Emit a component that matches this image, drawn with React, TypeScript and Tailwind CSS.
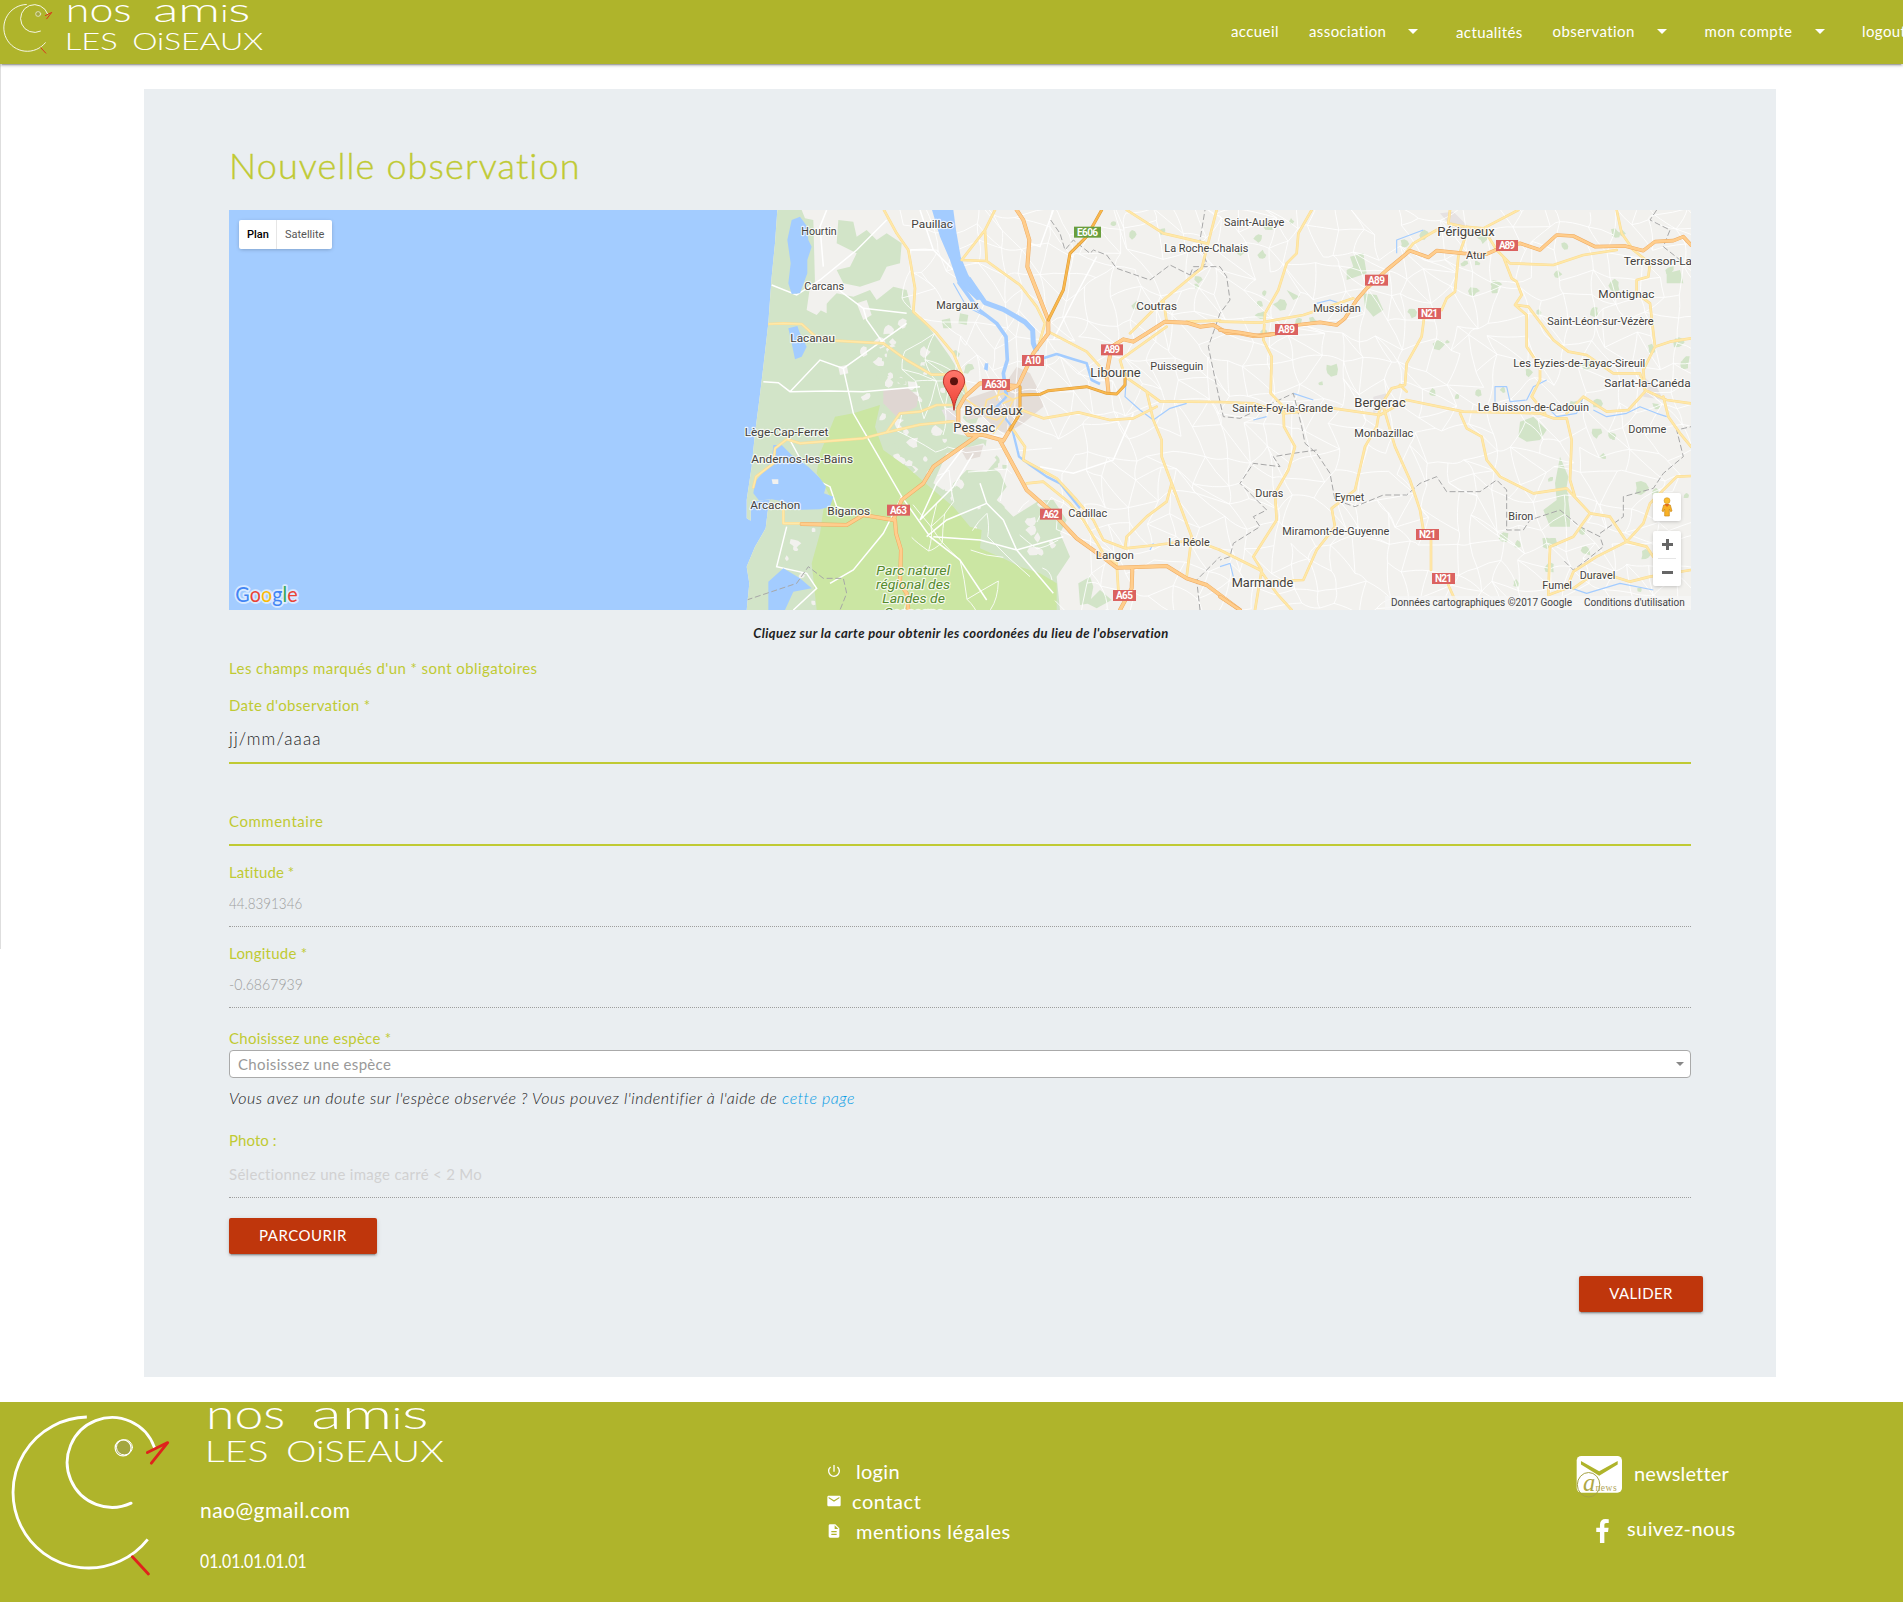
import type { ReactNode } from 'react';
import { MdDescription, MdEmail, MdPowerSettingsNew } from 'react-icons/md';

function Bird({ className }: { className: string }) {
  return (
    <svg className={className} viewBox="30 100 485 490" fill="none" strokeLinecap="round">
      <path d="M260 112A227 227 0 1 0 443 480" stroke="#fff" strokeWidth="8.5" strokeLinecap="butt" />
      <path d="M393 371A135 135 0 1 1 463 203" stroke="#fff" strokeWidth="8.5" />
      <circle cx="369" cy="205" r="24" fill="#a3a640" stroke="#fff" strokeWidth="3.5" />
      <ellipse cx="373" cy="203" rx="24" ry="23" stroke="#fff" strokeWidth="3" />
      <path d="M442 219L503 189L454 251M397 532L445 584" stroke="#df231c" strokeWidth="8.5" strokeLinejoin="round" />
    </svg>
  );
}

function Wordmark({ className }: { className: string }) {
  return (
    <svg className={`overflow-visible ${className}`} viewBox="615 75 720 180" fill="#fff" fontFamily="Lato" fontWeight="300">
      <text x="618" y="146" fontSize="124" textLength="238" lengthAdjust="spacingAndGlyphs">
        nos
      </text>
      <text x="934" y="146" fontSize="124" textLength="352" lengthAdjust="spacingAndGlyphs">
        am<tspan fontSize="88">i</tspan>s
      </text>
      <text x="614" y="247" fontSize="88" textLength="192" lengthAdjust="spacingAndGlyphs">
        LES
      </text>
      <text x="858" y="247" fontSize="88" textLength="474" lengthAdjust="spacingAndGlyphs">
        OiSEAUX
      </text>
    </svg>
  );
}

function seeded(seed: number) {
  let s = seed;
  return () => {
    s = (s * 16807) % 2147483647;
    return s / 2147483647;
  };
}

/** Jittered grid of minor country roads. */
function minorRoads() {
  const rnd = seeded(77);
  const cols = 36;
  const rows = 19;
  const px: number[][] = [];
  const py: number[][] = [];
  for (let r = 0; r < rows; r++) {
    px.push([]);
    py.push([]);
    for (let c = 0; c < cols; c++) {
      px[r].push(Math.round(560 + c * 68 + (rnd() - 0.5) * 62));
      py[r].push(Math.round(15 + r * 68 + (rnd() - 0.5) * 62));
    }
  }
  let d = '';
  for (let r = 0; r < rows; r++) {
    for (let c = 0; c < cols; c++) {
      const link = (rr: number, cc: number) => {
        const mx = (px[r][c] + px[rr][cc]) / 2 + (rnd() - 0.5) * 22;
        const my = (py[r][c] + py[rr][cc]) / 2 + (rnd() - 0.5) * 22;
        if (px[r][c] < 1020 && py[r][c] > 640 && rnd() < 0.65) return;
        d += `M${px[r][c]} ${py[r][c]}Q${mx.toFixed(0)} ${my.toFixed(0)} ${px[rr][cc]} ${py[rr][cc]}`;
      };
      if (c + 1 < cols && rnd() < 0.8) link(r, c + 1);
      if (r + 1 < rows && rnd() < 0.8) link(r + 1, c);
      if (r + 1 < rows && c + 1 < cols && rnd() < 0.35) link(r + 1, c + 1);
    }
  }
  return d;
}

/** Small irregular blobs scattered in a rectangle. */
function blobs(seed: number, n: number, x0: number, y0: number, x1: number, y1: number, size: number) {
  const rnd = seeded(seed);
  let d = '';
  for (let i = 0; i < n; i++) {
    const cx = x0 + rnd() * (x1 - x0);
    const cy = y0 + rnd() * (y1 - y0);
    const r = size * (0.4 + rnd() * 0.8);
    for (let k = 0; k < 8; k++) {
      const a = (k / 8) * Math.PI * 2;
      const q = r * (0.55 + rnd() * 0.7);
      d += `${k ? 'L' : 'M'}${(cx + Math.cos(a) * q).toFixed(0)} ${(cy + Math.sin(a) * q).toFixed(0)}`;
    }
    d += 'Z';
  }
  return d;
}

const MINOR = minorRoads();
const GREEN_SPECKS =
  blobs(11, 42, 1620, 60, 2900, 620, 17) + blobs(5, 22, 2350, 620, 2900, 1220, 17) + blobs(23, 12, 1180, 60, 1640, 560, 13);
const GREEN_WEST = blobs(41, 30, 470, 420, 760, 900, 20) + blobs(43, 18, 640, 760, 860, 960, 24);
const CLEARINGS = blobs(9, 44, 430, 360, 680, 860, 15) + blobs(19, 22, 640, 840, 1000, 1060, 15) + blobs(3, 14, 200, 980, 380, 1220, 13);

const COAST =
  'M172 30L165 130L155 230L145 370L130 500L118 600L105 700L95 800L80 900L80 955L92 962L92 905L150 898L143 935L137 985L105 1040L80 1100L88 1150L80 1230H2913V30Z';

const WEST_YELLOW = [
  'M492 30L530 100L565 150L585 265L580 335L650 400L700 460L725 520L740 580',
  'M145 372L190 370L245 372L285 408L345 422L490 430L560 480L635 524L700 524',
  'M100 862L108 830L160 790L165 745L200 718L240 730L430 715L500 697L600 674L700 664',
  'M500 697L540 640L600 635L650 615L700 615',
  'M825 30L795 90L725 180L800 183M795 90L800 183L900 255L950 320L975 370L955 440',
  'M985 395L1100 455L1140 500L1160 540',
  'M1220 30L1330 100L1460 130M1490 30L1445 205L1330 300L1340 365M1400 365L1500 362',
  'M1330 300L1230 400M1340 380L1200 480L1215 530L1280 575L1320 604L1500 606M1280 575L1300 660L1325 720L1325 770L1355 850L1385 930L1415 1010L1400 1130M1355 850L1340 905L1280 950L1220 1010L1215 1045',
  'M905 630L970 655L1075 637L1170 660L1240 655L1310 620',
  'M880 690L915 740L910 780L1010 835L1070 900L1120 960L1150 1020L1215 1045L1310 1035L1420 1020L1500 1050',
  'M920 850L970 845L1050 910L1090 960L1150 1060L1190 1090L1195 1170',
  'M190 930L190 970L245 970',
];

const WEST_MOTORWAY = [
  'M890 30L910 60L928 120L922 200L985 360L985 400L940 460L895 555L865 570',
  'M1165 575L1160 520L1175 440L1210 418L1240 425L1280 400L1335 365L1400 368L1440 380L1480 375L1520 398L1560 400L1600 408L1660 402',
  'M890 558L780 550L735 590L715 625L715 670L745 705L790 705L850 722L875 680',
  'M840 722L920 870L1000 940L1070 1015L1140 1065L1190 1103L1340 1098L1400 1135L1460 1155L1500 1185L1560 1230',
  'M1237 1105L1235 1165L1200 1230',
  'M775 705L640 800L610 850L545 900L520 960L430 945L380 975L245 972',
  'M525 960L528 1000L543 1050L540 1150L560 1180L565 1230',
];

const TRUNK = ['M1145 30L1100 110L1050 160L1030 270L985 360', 'M900 560L900 640L870 690M900 585L960 583L985 572L1100 560L1160 580L1190 582L1215 555L1215 520'];

const EAST_YELLOW = [
  'M275 30L235 100L230 160L200 190L175 270L135 340L130 420L155 470L152 580L190 620L192 680L225 740L205 810L165 880L170 960L100 1070L125 1110L105 1230',
  'M0 365L120 368L250 345L340 315L400 295',
  'M650 90L580 130L560 155M690 30L685 70L730 80L790 85L895 30',
  'M740 100L715 170L705 275L680 295L665 330',
  'M612 355L605 410L560 490L555 555L515 565L480 620L470 680L435 740L405 870L335 925L345 980L290 1050L250 1140L130 1145',
  'M0 606L100 610L190 640L340 625L480 645L560 600L730 635L960 640L1000 655L1040 655L1055 720L1050 840L1065 890',
  'M490 620L525 740L570 840L600 930L610 990M633 1020L633 1110M685 1155L705 1200L770 1230',
  'M720 640L740 685L785 710L800 780L840 830L940 880L1040 865L1110 940L1060 1010L990 1040L985 1180',
  'M1190 30L1205 100L1240 150M1240 150L1290 190L1285 230L1250 240L1250 280L1290 310L1305 440L1270 510L1275 570L1340 600L1413 610M1305 440L1350 425L1413 415M1330 590L1345 650L1380 700L1413 740',
  'M790 85L830 150L870 190L1000 195L1090 165L1190 150',
  'M850 170L875 235L890 245L905 285L885 315L920 345L920 440L960 500L960 540L935 590L975 640',
  'M890 315L925 320L1000 420L1045 455L1100 465L1180 520L1260 520L1275 570',
  'M1040 640L1090 590L1160 635L1225 630L1275 575',
  'M1110 940L1170 950L1220 1025L1130 1070L1060 1115L1040 1165L985 1185M1220 1025L1280 1040L1300 1070M1220 1025L1270 970L1290 910L1370 830L1413 828M1060 1165L1110 1130L1150 1120L1230 1145L1290 1130L1413 1110',
  'M0 1050L60 1080L120 1110L170 1180L215 1230',
  'M560 575L540 555',
];

const EAST_MOTORWAY = [
  'M0 390L60 398L120 408L165 402L230 375L300 367L350 375L375 355L410 300L440 265L500 210L570 152L625 172L650 152L730 160L800 162L850 140L900 130L960 150L1010 105L1060 108L1125 140L1215 138L1270 152L1305 125L1360 122L1390 110L1413 135',
  'M0 1190L60 1230',
];

const BORDERS = [
  'M992 60L1020 100L1035 150L1060 120L1110 160L1120 150L1160 165L1190 205L1290 240L1350 195L1410 225L1460 190L1440 120L1455 30',
  'M1410 225L1420 200L1500 200L1520 230L1530 300L1500 340L1465 440L1490 560L1510 650L1560 655L1720 580L1745 680L1755 730L1790 760L1830 820L1845 900L1905 920L1990 885L2060 885L2100 850L2150 830L2180 875L2280 875L2330 840L2360 870L2360 990L2410 990L2430 960L2520 930L2580 980L2640 1010L2650 1040L2600 1080L2560 1110L2530 1080',
  'M1790 750L1720 760L1660 770L1680 800L1600 790L1560 850L1640 930L1600 950L1620 980L1540 1030L1530 1070L1500 1080',
  'M2640 1000L2710 950L2710 890L2800 865L2830 820L2890 770L2870 690L2913 680M2810 30L2790 60L2850 90L2830 140L2880 180',
  'M80 1200L230 1150L265 1100L310 1135L370 1135L380 1180L360 1230M1440 1230L1430 1140L1500 1070',
];

type Label = [text: string, x: number, baseline: number, width: number, size?: number];

const LABELS: Label[] = [
  ['Hourtin', 244, 104, 106],
  ['Pauillac', 574, 83, 125],
  ['Carcans', 253, 269, 119],
  ['Margaux', 649, 326, 127],
  ['Lacanau', 211, 426, 134, 34],
  ['Lège-Cap-Ferret', 74, 707, 251, 34],
  ['Andernos-les-Bains', 94, 789, 305, 34],
  ['Arcachon', 91, 926, 150, 34],
  ['Biganos', 322, 944, 128, 34],
  ['Pessac', 700, 695, 126, 38],
  ['Bordeaux', 733, 644, 175, 41],
  ['Libourne', 1111, 530, 151, 39],
  ['Coutras', 1249, 330, 122, 34],
  ['Puisseguin', 1291, 509, 159],
  ['Cadillac', 1045, 950, 117],
  ['Langon', 1127, 1077, 115, 35],
  ['La Réole', 1345, 1037, 124],
  ['La Roche-Chalais', 1333, 156, 252],
  ['Saint-Aulaye', 1512, 77, 181],
  ['Périgueux', 2152, 109, 172, 39],
  ['Atur', 2238, 176, 61],
  ['Terrasson-La', 2711, 195, 205, 35],
  ['Montignac', 2635, 294, 168, 35],
  ['Mussidan', 1780, 335, 142],
  ['Saint-Léon-sur-Vézère', 2482, 374, 319],
  ['Les Eyzies-de-Tayac-Sireuil', 2380, 500, 396],
  ['Sarlat-la-Canéda', 2653, 561, 259, 35],
  ['Bergerac', 1903, 620, 154, 39],
  ['Sainte-Foy-la-Grande', 1537, 635, 302],
  ['Le Buisson-de-Cadouin', 2273, 632, 334],
  ['Domme', 2725, 698, 114],
  ['Monbazillac', 1903, 710, 177],
  ['Duras', 1606, 890, 84],
  ['Eymet', 1844, 902, 89],
  ['Biron', 2365, 959, 75],
  ['Miramont-de-Guyenne', 1687, 1004, 321],
  ['Marmande', 1535, 1162, 185, 39],
  ['Duravel', 2579, 1136, 107],
  ['Fumel', 2467, 1166, 89],
];

const PARK: Label[] = [
  ['Parc naturel', 469, 1125, 221],
  ['régional des', 468, 1167, 222],
  ['Landes de', 487, 1209, 188],
  ['Gascogne', 492, 1251, 178],
];

const SHIELDS: [text: string, x: number, y: number, width: number][] = [
  ['E606', 1062, 80, 81],
  ['A89', 1143, 433, 66],
  ['A10', 906, 465, 66],
  ['A630', 786, 537, 84],
  ['A63', 501, 914, 69],
  ['A62', 960, 926, 66],
  ['A65', 1179, 1170, 69],
  ['A89', 2328, 120, 66],
  ['A89', 1935, 224, 69],
  ['A89', 1665, 372, 69],
  ['N21', 2094, 324, 69],
  ['N21', 2088, 987, 69],
  ['N21', 2136, 1119, 69],
];

function Roads({ paths, color, edge, width }: { paths: string[]; color: string; edge: string; width: number }) {
  const d = paths.join('');
  return (
    <>
      <path d={d} stroke={edge} strokeWidth={width} />
      <path d={d} stroke={color} strokeWidth={width - 3} />
    </>
  );
}

function MapDrawing() {
  return (
    <svg className="block h-[400px] w-[1462px]" viewBox="-1473 30 4386 1200" fontFamily="Roboto">
      <defs>
        <clipPath id="land">
          <path d={COAST} />
        </clipPath>
        <linearGradient id="pin" x1="0" y1="0" x2="0" y2="1">
          <stop offset="0" stopColor="#ff776b" />
          <stop offset="1" stopColor="#ee3f33" />
        </linearGradient>
      </defs>
      <rect x="-1473" y="30" width="4386" height="1200" fill="#a3ccff" />
      <path d={COAST} fill="#f2f1ee" />
      <g clipPath="url(#land)">
        {/* woodland along the coast */}
        <path
          fill="#d2e4c8"
          d="M172 30H245L255 55L280 60L285 250L270 260L260 330L290 345L330 300L350 280L400 290L450 270L470 300L520 260L560 270L575 330L600 350L640 400L690 470L720 520L740 570L700 700L800 720L790 780L840 820L860 860L830 900L880 950L960 900L1000 900L1040 960L1020 1000L1050 1070L1010 1130L1020 1230H80L60 1100L60 900L110 600Z"
        />
        <path
          fill="#d2e4c8"
          d="M355 60L400 65L410 110L440 90L470 120L500 100L545 130L540 190L500 200L480 240L420 260L370 250L350 210L390 200L410 160L350 130ZM720 340L745 345L740 375L715 370ZM665 360L690 355L695 385L670 385Z"
        />
        <path fill="#f2f1ee" d={CLEARINGS} />
        <path fill="#d2e4c8" d={GREEN_WEST} />
        <path fill="#f2f1ee" d="M680 760L790 730L830 780L800 815L740 810L700 850L670 870L640 850ZM300 330L320 310L320 340ZM410 310L440 300L455 345L430 360ZM355 500L380 495L385 520L360 525Z" />
        {/* regional park */}
        <path
          fill="#cbe6a3"
          d="M345 650L400 640L480 615L465 680L490 750L560 800L640 870L700 920L750 980L785 990L780 1045L860 1080L900 1100L960 1120L1010 1150L1010 1230H290L275 1090L300 1000L310 930L330 890L310 850L290 820L300 760Z"
        />
        <path fill="#d2e4c8" d="M1075 1150L1110 1130L1120 1160L1110 1210L1080 1215ZM1100 1210L1140 1170L1175 1200L1130 1225Z" />
        <path fill="#dfd6d2" d="M490 570L560 562L595 590L590 620L530 650L490 610Z" />
        <path
          fill="#e4ddd8"
          d="M730 600L790 580L850 560L890 500L930 520L960 580L970 620L910 670L860 700L830 690L790 650L740 660ZM720 745L790 735L780 770L740 780Z"
        />
        <path fill="#e6e2e2" d="M665 630L700 620L715 665L680 660ZM2160 40L2200 35L2240 75L2290 110L2220 110ZM2770 530L2810 560L2830 600L2770 590ZM1960 590L2000 580L2010 620L1960 640Z" />
        <path fill="#d2e4c8" d={GREEN_SPECKS} />
        <path
          fill="#d2e4c8"
          d="M2520 770L2545 830L2540 860L2550 940L2550 980L2490 980L2470 930L2510 900L2505 850ZM2400 665L2440 650L2480 690L2460 720L2420 725L2395 710ZM1890 170L1930 160L1940 220L1880 240L1880 210L1900 200ZM1930 280L1970 285L1990 330L1960 350L1935 320ZM2840 220L2880 210L2890 250L2840 250ZM1700 270L1740 290L1720 300Z"
        />
        {/* minor roads */}
        <path d={MINOR} fill="none" stroke="#fff" strokeWidth="3" strokeOpacity=".85" />
        <path
          fill="none"
          stroke="#fff"
          strokeWidth="4.5"
          d="M130 545L175 548L210 575L330 573L430 575L600 560M155 255L230 285L300 240L410 150L500 60M320 30L300 80L310 200M330 250L430 325L440 360L490 430M210 575L300 480L370 505L560 370M370 505L400 640L470 760L545 890L630 1010L720 1080L800 1200M210 720L270 830L330 860L350 920L410 940M545 890L490 1000L400 1110L330 1150M740 730L650 850L600 960M600 960L700 860L760 760M780 850L800 910L680 960L620 1010M800 910L850 960L890 1050L1000 1180M640 1010L780 1020L890 1050L1030 1010M200 980L170 1100L260 1120L290 1165L220 1230M640 150L610 60L600 30M565 150L640 150L700 210M430 325L560 340M1000 30L960 140L930 130M1130 170L1060 300L1000 420M1240 640L1180 780L1060 820L960 800"
        />
        {/* lakes and rivers */}
        <g fill="#a3ccff">
          <path d="M215 60L240 50L262 80L265 120L275 140L262 180L262 220L240 280L215 282L205 250L212 190L202 120Z" />
          <path d="M205 385L232 378L240 400L260 440L245 470L225 478L215 430Z" />
          <path d="M160 735L185 735L215 765L265 800L300 835L318 860L312 880L340 890L330 920L300 928L220 930L195 905L155 898L120 905L100 880L105 845L135 810L155 780Z" />
          <path d="M145 1145L190 1105L240 1135L275 1165L220 1175L195 1230L145 1230Z" />
          <path d="M636 30H700L708 90L722 170L745 225L795 298L770 300L712 245L690 180L660 110Z" />
          <path d="M795 490L805 490L803 512L792 508Z" />
        </g>
        <g fill="none" stroke="#a3ccff" strokeLinejoin="round">
          <path strokeWidth="15" d="M745 235L795 308L850 328L915 366L938 390L940 430L950 455" />
          <path strokeWidth="8" d="M960 478L1010 462L1060 478L1100 490L1115 540L1140 552" />
          <path strokeWidth="11" d="M715 245L775 328L830 370L858 410L862 480L850 520L860 590" />
          <path strokeWidth="7" d="M860 590L830 620L875 680L897 770L930 795L980 830L1020 850L1060 900L1080 925" />
          <path
            strokeWidth="3.5"
            d="M1220 520L1215 590L1260 630L1300 660L1350 625L1400 610M700 250L740 320L800 350M2325 620L2325 560L2360 560L2370 605L2420 600L2440 560L2480 540M2480 620L2510 650L2570 640L2590 590M2620 630L2660 650L2720 640L2760 620L2810 640L2840 650M1720 580L1780 600M1500 1100L1530 1090L1540 1130M1790 310L1830 300L1860 310M1290 1050L1300 1030M2030 160L2030 120L2110 90M1600 660L1640 650M2540 1160L2600 1180L2700 1150L2800 1170"
          />
          <path d="M155 838H175V852H158Z" fill="#f2f1ee" stroke="none" />
        </g>
        <path fill="none" stroke="#a7a7a7" strokeWidth="3" strokeDasharray="18 8" d={BORDERS.join('')} />
        {/* main roads */}
        <g fill="none" strokeLinejoin="round" strokeLinecap="round">
          <Roads paths={WEST_YELLOW} color="#ffe8a8" edge="#fbdc93" width={8} />
          <g transform="translate(1500 0)">
            <Roads paths={EAST_YELLOW} color="#ffe8a8" edge="#fbdc93" width={8} />
          </g>
          <path
            stroke="#ffe29a"
            strokeWidth="5"
            d="M790 640L800 600L850 580L880 600L860 640L830 660L800 650M740 600L800 640M840 560L830 600M850 610L900 590M820 700L850 660L870 620"
          />
          <Roads paths={WEST_MOTORWAY} color="#ffcd8c" edge="#eeab62" width={12} />
          <g transform="translate(1500 0)">
            <Roads paths={EAST_MOTORWAY} color="#ffcd8c" edge="#eeab62" width={11} />
          </g>
          <Roads paths={TRUNK} color="#f9b84e" edge="#dc9a38" width={9} />
        </g>
      </g>
      {SHIELDS.map(([text, x, y, width]) => (
        <g key={`${text}-${x}`}>
          <rect x={x} y={y} width={width} height="33" fill={text === 'E606' ? '#699e3c' : '#db6260'} />
          <text x={x + 9} y={y + 27} fontSize="30" fontWeight="700" fill="#fff" textLength={width - 18}>
            {text}
          </text>
        </g>
      ))}
      <g fill="#45423d" stroke="#fff" strokeOpacity=".75" strokeWidth="7" strokeLinejoin="round" paintOrder="stroke">
        {LABELS.map(([text, x, y, width, size = 33]) => (
          <text key={text} x={x} y={y} fontSize={size} textLength={width} lengthAdjust="spacingAndGlyphs">
            {text}
          </text>
        ))}
        {PARK.map(([text, x, y, width]) => (
          <text
            key={text}
            x={x}
            y={y}
            fontSize="40"
            fontStyle="italic"
            fill="#568b2f"
            textLength={width}
            lengthAdjust="spacingAndGlyphs"
          >
            {text}
          </text>
        ))}
      </g>
      <path
        d="M702 631C699 600 690 588 680 570C673 558 670 552 670 543A32 32 0 1 1 734 543C734 552 731 558 724 570C714 588 705 600 702 631Z"
        fill="url(#pin)"
        stroke="#b8372d"
        strokeWidth="3"
      />
      <circle cx="702" cy="544" r="12" fill="#5c120d" />
      <text
        x="-1454"
        y="1206"
        fontSize="61"
        fontFamily="Lato"
        fontWeight="400"
        textLength="187"
        lengthAdjust="spacingAndGlyphs"
        stroke="#fff"
        strokeOpacity=".6"
        strokeWidth="11"
        strokeLinejoin="round"
        paintOrder="stroke"
      >
        <tspan fill="#4285f4">G</tspan>
        <tspan fill="#ea4335">o</tspan>
        <tspan fill="#fbbc05">o</tspan>
        <tspan fill="#4285f4">g</tspan>
        <tspan fill="#34a853">l</tspan>
        <tspan fill="#ea4335">e</tspan>
      </text>
    </svg>
  );
}

function ObservationMap() {
  return (
    <div className="relative mt-[25px] h-[400px] w-[1462px] overflow-hidden font-['Roboto',sans-serif]">
      <MapDrawing />
      <div className="absolute top-[10px] left-[10px] flex h-[29px] rounded-[2px] bg-white text-[11px] leading-[29px] shadow-[0_1px_4px_-1px_rgba(0,0,0,0.3)]">
        <span className="w-[38px] border-r border-[#e6e6e6] pl-2 font-medium text-black">Plan</span>
        <span className="w-[55px] pl-2 text-[#565656]">Satellite</span>
      </div>
      <div className="absolute top-[283px] right-[10px] flex size-7 items-center justify-center rounded-[2px] bg-white shadow-[0_1px_4px_-1px_rgba(0,0,0,0.3)]">
        <svg className="h-5 w-3" viewBox="0 0 36 60">
          <path d="M8 24L3 42L7 44L11 36V57H25V36L29 44L33 42L28 24Z" fill="#f9b125" stroke="#c98a1a" strokeWidth="2" />
          <path d="M10 21L18 30L26 21Z" fill="#e06a1c" />
          <circle cx="18" cy="11" r="9" fill="#fbbd2e" stroke="#c98a1a" strokeWidth="1.5" />
        </svg>
      </div>
      <div className="absolute top-[321px] right-[10px] flex w-7 flex-col items-center rounded-[2px] bg-white shadow-[0_1px_4px_-1px_rgba(0,0,0,0.3)]">
        <svg className="h-[27px] w-[11px]" viewBox="0 0 11 27">
          <path d="M0 13.5H11M5.5 8V19" stroke="#666" strokeWidth="3" />
        </svg>
        <div className="h-px w-[18px] bg-[#e6e6e6]" />
        <svg className="h-[27px] w-[11px]" viewBox="0 0 11 27">
          <path d="M0 13.5H11" stroke="#666" strokeWidth="3" />
        </svg>
      </div>
      <div className="absolute right-0 bottom-0 flex h-[14px] w-[306px] bg-[#f5f5f5]/75 text-[10px] leading-[14px] text-[#444]">
        <span className="w-[193px] pl-[6px]">Données cartographiques ©2017 Google</span>
        <span className="pl-[6px] tracking-[-0.03px]">Conditions d'utilisation</span>
      </div>
    </div>
  );
}

function Caret() {
  return (
    <svg className="ml-[22px] h-[5px] w-[10px]" viewBox="0 0 10 5">
      <path d="M0 0H10L5 5Z" fill="#fff" />
    </svg>
  );
}

function NavItem({ className, children, menu }: { className: string; children: ReactNode; menu?: boolean }) {
  return (
    <a className={`flex h-[62px] shrink-0 items-center ${className}`}>
      <span>{children}</span>
      {menu && <Caret />}
    </a>
  );
}

function FormLabel({ className, children }: { className: string; children: ReactNode }) {
  return <div className={`leading-5 text-[#c0ca33] ${className}`}>{children}</div>;
}

function FooterLink({ icon, className, children }: { icon: ReactNode; className: string; children: ReactNode }) {
  return (
    <a className="flex h-[30px] items-center">
      {icon}
      <span className={className}>{children}</span>
    </a>
  );
}

const BUTTON =
  'flex h-9 items-center justify-center rounded-[2px] bg-[#bf360c] pb-[2px] text-white shadow-[0_2px_2px_0_rgba(0,0,0,0.14),0_1px_5px_0_rgba(0,0,0,0.12),0_3px_1px_-2px_rgba(0,0,0,0.2)]';

export default function App() {
  return (
    <div className="relative h-[1602px] w-[1903px] overflow-hidden bg-white font-['Lato',sans-serif] text-[15px]">
      <div className="absolute top-0 left-0 h-[949px] w-px bg-[#dedede]" />

      <header className="relative flex h-16 items-start bg-[#afb42b] text-white shadow-[0_2px_2px_0_rgba(0,0,0,0.14),0_1px_5px_0_rgba(0,0,0,0.12),0_3px_1px_-2px_rgba(0,0,0,0.2)]">
        <Bird className="mt-[3px] ml-[3px] h-[51px] w-[50px]" />
        <Wordmark className="mt-[2px] ml-3 h-[50px] w-[199px]" />
        <nav className="ml-auto flex w-[672px] overflow-hidden whitespace-nowrap">
          <NavItem className="w-[78px] tracking-[0.4px]">accueil</NavItem>
          <NavItem className="w-[147px] tracking-[0.4px]" menu>
            association
          </NavItem>
          <NavItem className="w-[96.5px] pt-[2px] tracking-[0.4px]">actualités</NavItem>
          <NavItem className="w-[152px] tracking-[0.43px]" menu>
            observation
          </NavItem>
          <NavItem className="w-[157.5px] tracking-[0.56px]" menu>
            mon compte
          </NavItem>
          <NavItem className="tracking-[0.4px]">logout</NavItem>
        </nav>
      </header>

      <main className="mt-[25px] ml-36 h-[1288px] w-[1632px] bg-[#eaeef1] px-[85px] pt-14">
        <h1 className="text-4xl leading-10 font-light tracking-[1.12px] text-[#c0ca33] [-webkit-text-stroke:0.4px_#c0ca33]">
          Nouvelle observation
        </h1>
        <ObservationMap />
        <p className="mt-[13px] pl-[2px] text-center text-[13px] leading-5 font-bold tracking-[0.42px] text-[#212121] italic">
          Cliquez sur la carte pour obtenir les coordonées du lieu de l'observation
        </p>

        <FormLabel className="mt-[15px] tracking-[0.42px]">Les champs marqués d'un * sont obligatoires</FormLabel>
        <FormLabel className="mt-[17px] tracking-[0.34px]">Date d'observation *</FormLabel>
        <div className="mt-[14px] h-[35px] border-b-2 border-[#c0ca33] text-[17px] leading-5 font-light tracking-[1.1px] text-[#212121]">
          jj/mm/aaaa
        </div>

        <FormLabel className="mt-[47px] h-[35px] border-b-2 border-[#c0ca33] tracking-[0.53px]">Commentaire</FormLabel>

        <FormLabel className="mt-4 tracking-[0.1px]">Latitude *</FormLabel>
        <div className="mt-[11px] h-[34px] border-b border-dotted border-[#9e9e9e] leading-5 font-light text-[#9e9e9e]">
          <span className="inline-block origin-left scale-x-[0.895]">44.8391346</span>
        </div>

        <FormLabel className="mt-4 tracking-[0.23px]">Longitude *</FormLabel>
        <div className="mt-[11px] h-[34px] border-b border-dotted border-[#9e9e9e] leading-5 font-light text-[#9e9e9e]">
          <span className="inline-block origin-left scale-x-[0.94]">-0.6867939</span>
        </div>

        <FormLabel className="mt-5 tracking-[0.25px]">Choisissez une espèce *</FormLabel>
        <div className="mt-[2px] flex h-7 items-center justify-between rounded border border-[#aaa] bg-white pr-[6px] pl-2 tracking-[0.33px] text-[#999]">
          <span>Choisissez une espèce</span>
          <svg className="h-1 w-2" viewBox="0 0 8 4">
            <path d="M0 0H8L4 4Z" fill="#888" />
          </svg>
        </div>
        <p className="mt-[10px] text-base leading-5 font-light tracking-[0.53px] text-[#212121] italic">
          Vous avez un doute sur l'espèce observée ? Vous pouvez l'indentifier à l'aide de{' '}
          <a className="text-[#039be5]">cette page</a>
        </p>

        <FormLabel className="mt-[22px] tracking-[0.06px]">Photo :</FormLabel>
        <div className="mt-[14px] h-[34px] border-b border-dotted border-[#9e9e9e] leading-5 tracking-[0.29px] text-[#d1d1d1]">
          Sélectionnez une image carré &lt; 2 Mo
        </div>
        <button className={`${BUTTON} mt-5 w-[148px] tracking-[0.49px]`}>PARCOURIR</button>
        <button className={`${BUTTON} mt-[22px] -mr-3 ml-auto w-[124px] tracking-[0.35px]`}>VALIDER</button>
      </main>

      <footer className="mt-[25px] flex h-[200px] items-start bg-[#afb42b] text-xl leading-[30px] text-white">
        <Bird className="mt-[11px] ml-[10px] h-[163px] w-[162px]" />
        <div className="ml-7 w-[626px]">
          <Wordmark className="mt-[3px] ml-[5px] h-[60px] w-[240px]" />
          <p className="mt-[30px] text-[21px] tracking-[0.48px]">nao@gmail.com</p>
          <p className="mt-5 origin-left scale-x-[0.79]">01.01.01.01.01</p>
        </div>
        <div className="mt-[54px] w-[749px]">
          <FooterLink icon={<MdPowerSettingsNew className="size-4" />} className="ml-[14px] pb-px tracking-[0.3px]">
            login
          </FooterLink>
          <FooterLink icon={<MdEmail className="size-4" />} className="ml-[10px] tracking-[0.55px]">
            contact
          </FooterLink>
          <FooterLink icon={<MdDescription className="size-4" />} className="ml-[14px] tracking-[0.56px]">
            mentions légales
          </FooterLink>
        </div>
        <div className="mt-[53px]">
          <a className="flex h-[43px] items-start">
            <svg className="h-[43px] w-12" viewBox="105 75 145 130">
              <rect x="110" y="78" width="137" height="111" rx="14" fill="#fff" />
              <path d="M123 93L178 124L234 93V104L178 138L123 104Z" fill="#afb42b" />
              <ellipse cx="146" cy="165" rx="34" ry="37" fill="none" stroke="#a3a143" strokeWidth="3" />
              <text x="129" y="185" fontFamily="Liberation Serif" fontStyle="italic" fontSize="74" fill="#afa845">
                a
              </text>
              <text x="167" y="183" fontFamily="Liberation Serif" fontSize="29" fill="#b3a760" textLength="64">
                news
              </text>
            </svg>
            <span className="ml-[11px] pt-[3px] tracking-[0.16px]">newsletter</span>
          </a>
          <a className="mt-[15px] flex items-center">
            <svg className="mt-[6px] ml-[21px] h-6 w-[13px]" viewBox="479 0 864 1664">
              <path
                fill="#fff"
                d="M1343 12v264h-157q-86 0-116 36t-30 108v189h293l-39 296h-254v759h-306v-759h-255v-296h255v-218q0-186 104-288.5t277-102.5q147 0 228 12z"
              />
            </svg>
            <span className="ml-[18px] tracking-[0.42px]">suivez-nous</span>
          </a>
        </div>
      </footer>
    </div>
  );
}
